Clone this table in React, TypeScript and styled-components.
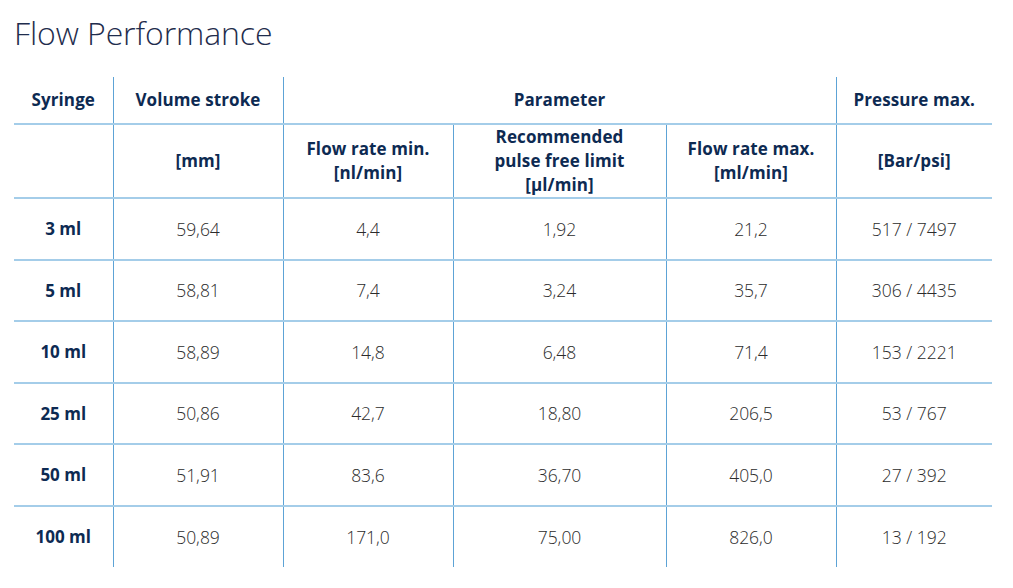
import React from "react";
import styled, { createGlobalStyle } from "styled-components";

const GlobalStyle = createGlobalStyle`
  html, body {
    margin: 0;
    padding: 0;
    background: #fff;
  }
  body {
    font-family: "Open Sans", "Liberation Sans", sans-serif;
  }
`;

const Page = styled.div`
  width: 1013px;
  height: 588px;
  padding: 0 21px 0 14px;
  box-sizing: border-box;
  overflow: hidden;
`;

const Title = styled.h1`
  margin: 0;
  padding-top: 11px;
  height: 77px;
  box-sizing: border-box;
  font-size: 32px;
  line-height: 44px;
  font-weight: 300;
  color: #1f2d4d;
  letter-spacing: -0.1px;
`;

const Table = styled.table`
  width: 978px;
  border-collapse: collapse;
  table-layout: fixed;
`;

const Head = styled.th<{ $h: number }>`
  height: ${(p) => p.$h}px;
  padding: 0 6px;
  font-size: 17px;
  line-height: 24px;
  font-weight: 700;
  color: #0d2a52;
  text-align: center;
  vertical-align: middle;
  letter-spacing: 0.1px;
  border-left: 1px solid #5da3d6;
  border-right: 1px solid #5da3d6;
  border-bottom: 2px solid #a4cde9;
  &:first-child { border-left: none; }
  &:last-child { border-right: none; }
`;

const Row = styled.tr`
  height: 61.5px;
  & + & td { border-top: 2px solid #a4cde9; }
`;

const Cell = styled.td<{ $bold?: boolean }>`
  padding: 0 6px;
  font-size: ${(p) => (p.$bold ? 17 : 17.5)}px;
  font-weight: ${(p) => (p.$bold ? 700 : 300)};
  color: ${(p) => (p.$bold ? "#0d2a52" : "#2b2b2b")};
  text-align: center;
  vertical-align: middle;
  border-left: 1px solid #5da3d6;
  border-right: 1px solid #5da3d6;
  &:first-child { border-left: none; }
  &:last-child { border-right: none; }
`;

const cols = [99, 170, 170, 213, 170, 156];

const rows = [
  ["3 ml", "59,64", "4,4", "1,92", "21,2", "517 / 7497"],
  ["5 ml", "58,81", "7,4", "3,24", "35,7", "306 / 4435"],
  ["10 ml", "58,89", "14,8", "6,48", "71,4", "153 / 2221"],
  ["25 ml", "50,86", "42,7", "18,80", "206,5", "53 / 767"],
  ["50 ml", "51,91", "83,6", "36,70", "405,0", "27 / 392"],
  ["100 ml", "50,89", "171,0", "75,00", "826,0", "13 / 192"],
];

export default function App() {
  return (
    <>
      <GlobalStyle />
      <Page>
        <Title>Flow Performance</Title>
        <Table>
          <colgroup>
            {cols.map((w, i) => (
              <col key={i} style={{ width: w }} />
            ))}
          </colgroup>
          <thead>
            <tr>
              <Head $h={46}>Syringe</Head>
              <Head $h={46}>Volume stroke</Head>
              <Head $h={46} colSpan={3}>Parameter</Head>
              <Head $h={46}>Pressure max.</Head>
            </tr>
            <tr>
              <Head $h={72}></Head>
              <Head $h={72}>[mm]</Head>
              <Head $h={72}>
                Flow rate min.
                <br />
                [nl/min]
              </Head>
              <Head $h={72}>
                Recommended
                <br />
                pulse free limit
                <br />
                [µl/min]
              </Head>
              <Head $h={72}>
                Flow rate max.
                <br />
                [ml/min]
              </Head>
              <Head $h={72}>[Bar/psi]</Head>
            </tr>
          </thead>
          <tbody>
            {rows.map((r) => (
              <Row key={r[0]}>
                {r.map((v, i) => (
                  <Cell key={i} $bold={i === 0}>
                    {v}
                  </Cell>
                ))}
              </Row>
            ))}
          </tbody>
        </Table>
      </Page>
    </>
  );
}
